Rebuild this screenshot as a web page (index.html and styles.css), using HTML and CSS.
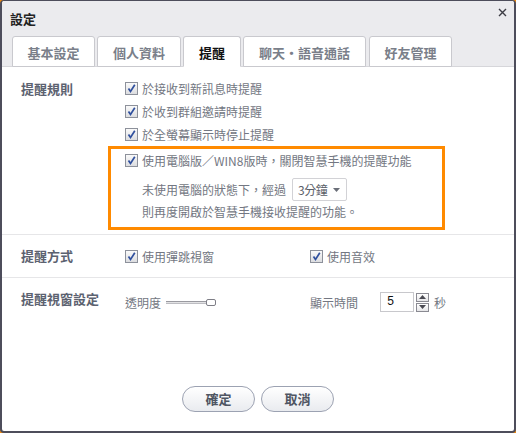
FILE: index.html
```html
<!DOCTYPE html>
<html lang="zh-Hant">
<head>
<meta charset="utf-8">
<title>設定</title>
<link rel="stylesheet" href="styles.css">
</head>
<body>
<div class="window">
  <div class="titlebar">
    <span class="title">設定</span>
    <span class="close"><svg width="9" height="9" viewBox="0 0 9 9"><path d="M1 1L8 8M8 1L1 8" stroke="#3c3c44" stroke-width="1.4" fill="none"/></svg></span>
  </div>
  <div class="tabs">
    <div class="tab w82">基本設定</div>
    <div class="tab w83">個人資料</div>
    <div class="tab active w57">提醒</div>
    <div class="tab w122">聊天・語音通話</div>
    <div class="tab w82 last">好友管理</div>
  </div>
  <div class="content">
    <div class="section s1">
      <div class="label">提醒規則</div>
      <div class="controls">
        <div class="row r23"><span class="cb"><svg width="11" height="11" viewBox="0 0 11 11"><path d="M2.5 5.5L4.5 8.5L8.8 1.8" stroke="#30509e" stroke-width="1.7" fill="none"/></svg></span>於接收到新訊息時提醒</div>
        <div class="row r23"><span class="cb"><svg width="11" height="11" viewBox="0 0 11 11"><path d="M2.5 5.5L4.5 8.5L8.8 1.8" stroke="#30509e" stroke-width="1.7" fill="none"/></svg></span>於收到群組邀請時提醒</div>
        <div class="row r23"><span class="cb"><svg width="11" height="11" viewBox="0 0 11 11"><path d="M2.5 5.5L4.5 8.5L8.8 1.8" stroke="#30509e" stroke-width="1.7" fill="none"/></svg></span>於全螢幕顯示時停止提醒</div>
        <div class="highlight">
          <div class="row r22"><span class="cb"><svg width="11" height="11" viewBox="0 0 11 11"><path d="M2.5 5.5L4.5 8.5L8.8 1.8" stroke="#30509e" stroke-width="1.7" fill="none"/></svg></span>使用電腦版／WIN8版時，關閉智慧手機的提醒功能</div>
          <div class="row sub dd-row">未使用電腦的狀態下，經過<span class="dropdown"><span>3分鐘</span><svg width="7" height="4" viewBox="0 0 7 4"><path d="M0 0H7L3.5 4Z" fill="#6a6e78"/></svg></span></div>
          <div class="row sub r20">則再度開啟於智慧手機接收提醒的功能。</div>
        </div>
      </div>
    </div>
    <div class="section s2">
      <div class="label">提醒方式</div>
      <div class="controls two">
        <div class="row col"><span class="cb"><svg width="11" height="11" viewBox="0 0 11 11"><path d="M2.5 5.5L4.5 8.5L8.8 1.8" stroke="#30509e" stroke-width="1.7" fill="none"/></svg></span>使用彈跳視窗</div>
        <div class="row col"><span class="cb"><svg width="11" height="11" viewBox="0 0 11 11"><path d="M2.5 5.5L4.5 8.5L8.8 1.8" stroke="#30509e" stroke-width="1.7" fill="none"/></svg></span>使用音效</div>
      </div>
    </div>
    <div class="section s3">
      <div class="label">提醒視窗設定</div>
      <div class="controls two">
        <div class="row col">透明度<span class="slider"><span class="track"></span><span class="thumb"></span></span></div>
        <div class="row col">顯示時間<span class="num">5</span><span class="spin"><span class="sb"><svg width="7" height="4" viewBox="0 0 7 4"><path d="M0 4H7L3.5 0Z" fill="#4a4a52"/></svg></span><span class="sb"><svg width="7" height="4" viewBox="0 0 7 4"><path d="M0 0H7L3.5 4Z" fill="#4a4a52"/></svg></span></span><span class="unit">秒</span></div>
      </div>
    </div>
    <div class="footer">
      <button class="btn">確定</button>
      <button class="btn">取消</button>
    </div>
  </div>
</div>
</body>
</html>
```
FILE: styles.css
```css
* { box-sizing: border-box; }
html, body { margin: 0; padding: 0; }
body {
  background: #f08a10;
  font-family: "Noto Sans CJK TC", "Liberation Sans", sans-serif;
  font-size: 12px;
  color: #737782;
}
.window {
  width: 516px;
  height: 433px;
  border: 2px solid #4d4d5b;
  border-top-width: 1px;
  border-radius: 4px;
  background: #fff;
  display: flex;
  flex-direction: column;
  overflow: hidden;
}
.titlebar {
  height: 35px;
  background: #ebebee;
  display: flex;
  align-items: center;
  justify-content: space-between;
  padding: 0 8px 0 8px;
}
.title {
  font-weight: bold;
  font-size: 13px;
  color: #222;
  line-height: 14px;
  margin-top: 1px;
}
.close {
  display: flex;
  align-self: flex-start;
  margin-top: 7px;
  margin-right: -1px;
}
.tabs {
  height: 31px;
  background: #ebebee;
  display: flex;
  gap: 2px;
  padding-left: 10px;
  align-items: flex-end;
  border-bottom: 1px solid #d6d6da;
}
.tab {
  height: 31px;
  background: #fff;
  border: 1px solid #c9c9ce;
  border-radius: 3px 3px 0 0;
  display: flex;
  align-items: center;
  justify-content: center;
  font-weight: bold;
  font-size: 13px;
  color: #7a7f8a;
  margin-bottom: -1px;
  padding-top: 1px;
}
.tab.last { margin-left: 1px; }
.tab.active {
  color: #111;
  border-bottom-color: #fff;
}
.w82 { width: 83px; }
.w83 { width: 84px; }
.w57 { width: 58px; }
.w122 { width: 123px; }
.content {
  flex: 1;
  display: flex;
  flex-direction: column;
}
.section {
  display: flex;
  padding-left: 19px;
}
.label {
  width: 104px;
  flex: none;
  font-weight: bold;
  font-size: 13px;
  color: #5c6270;
  line-height: 23px;
}
.s1 { padding-top: 10px; padding-bottom: 4px; border-bottom: 1px solid #e6e6e8; }
.s2 { height: 43px; align-items: center; border-bottom: 1px solid #e6e6e8; }
.s2 .label { line-height: 20px; }
.s3 { padding-top: 14px; align-items: flex-start; }
.s3 .label { line-height: 14px; }
.controls { display: flex; flex-direction: column; }
.controls.two { flex-direction: row; }
.row {
  display: flex;
  align-items: center;
  white-space: nowrap;
}
.r23 { height: 23px; }
.r22 { height: 22px; }
.r20 { height: 20px; }
.col { width: 185px; height: 20px; }
.cb {
  width: 13px;
  height: 13px;
  border: 1px solid #8d919b;
  background: linear-gradient(#fafafa, #dcdde0);
  display: inline-flex;
  align-items: center;
  justify-content: center;
  margin-right: 4px;
  flex: none;
}
.highlight {
  margin-left: -17px;
  width: 337px;
  border: 3px solid #ff8a00;
  padding: 0 0 6px 14px;
}
.dd-row { margin-top: 7px; height: 23px; }
.sub { padding-left: 17px; }
.dropdown {
  margin-left: 6px;
  width: 55px;
  height: 23px;
  border: 1px solid #d2d2d6;
  border-radius: 2px;
  display: inline-flex;
  align-items: center;
  justify-content: space-between;
  padding: 0 6px 0 5px;
  color: #5a5e68;
  letter-spacing: -0.5px;
}
.slider {
  position: relative;
  width: 50px;
  height: 8px;
  margin-left: 5px;
  display: inline-flex;
  align-items: center;
}
.track {
  width: 44px;
  height: 3px;
  border-top: 1px solid #9a9aa0;
  border-bottom: 1px solid #bdbdc2;
  background: #e2e2e4;
}
.thumb {
  width: 10px;
  height: 7px;
  border: 1px solid #7e7e86;
  border-radius: 2px;
  background: #fff;
  margin-left: -4px;
}
.num {
  margin-left: 22px;
  width: 34px;
  height: 20px;
  border: 1px solid #c8c8cc;
  color: #111;
  font-family: "Liberation Mono", monospace;
  font-size: 12px;
  display: inline-flex;
  align-items: center;
  padding-left: 6px;
}
.spin {
  display: inline-flex;
  flex-direction: column;
  gap: 1px;
  margin-left: 2px;
}
.sb {
  width: 13px;
  height: 9px;
  border: 1px solid #8a8a92;
  background: linear-gradient(#fff, #e6e6e8);
  display: flex;
  align-items: center;
  justify-content: center;
}
.unit { margin-left: 5px; }
.footer {
  margin-top: auto;
  display: flex;
  justify-content: center;
  gap: 6px;
  padding-bottom: 19px;
}
.btn {
  width: 73px;
  height: 26px;
  border: 1px solid #9ca2b2;
  border-radius: 13px;
  background: linear-gradient(#ffffff, #e9ebef);
  font-family: "Noto Sans CJK TC", "Liberation Sans", sans-serif;
  font-weight: bold;
  font-size: 13px;
  color: #4f5663;
  padding: 0;
  line-height: 24px;
}
```
